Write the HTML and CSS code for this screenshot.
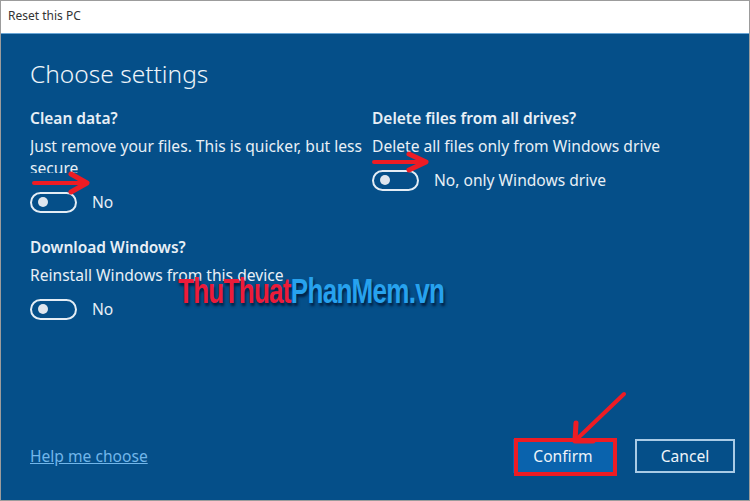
FILE: index.html
```html
<!DOCTYPE html>
<html>
<head>
	<title>Reset this PC</title>
	<meta charset="utf-8">
	<link rel="stylesheet" href="styles.css">
</head>
<body>
<div class="window">
	<div class="titlebar">Reset this PC</div>
	<div class="panel">
		<h1>Choose settings</h1>
		<div class="options">
			<div class="option">
				<div class="label">Clean data?</div>
				<div class="desc clip">Just remove your files. This is quicker, but less secure</div>
				<div class="switch-row">
					<span class="switch"><span class="knob"></span></span>
					<span>No</span>
				</div>
			</div>
			<div class="option">
				<div class="label">Delete files from all drives?</div>
				<div class="desc">Delete all files only from Windows drive</div>
				<div class="switch-row">
					<span class="switch"><span class="knob"></span></span>
					<span>No, only Windows drive</span>
				</div>
			</div>
			<div class="option">
				<div class="label">Download Windows?</div>
				<div class="desc">Reinstall Windows from this device</div>
				<div class="switch-row">
					<span class="switch"><span class="knob"></span></span>
					<span>No</span>
				</div>
			</div>
		</div>
		<div class="footer">
			<a class="help" href="#">Help me choose</a>
			<div class="buttons">
				<button class="btn primary">Confirm</button>
				<button class="btn">Cancel</button>
			</div>
		</div>
	</div>

	<!-- marks drawn over the screenshot -->
	<svg class="arrow arrow-1" width="64" height="30" viewBox="0 0 64 30">
		<path d="M3 15 H52" />
		<path class="head" d="M40 6 L56 15 L40 24" />
	</svg>
	<svg class="arrow arrow-2" width="64" height="30" viewBox="0 0 64 30">
		<path d="M3 15 H52" />
		<path class="head" d="M38 7 L55 15 L38 23" />
	</svg>
	<svg class="arrow arrow-3" width="60" height="56" viewBox="0 0 60 56">
		<path d="M54 3 L8 47" />
		<path class="head" d="M6 32 L5 50 L23 50" />
	</svg>
	<div class="redbox"></div>
	<div class="watermark"><span class="wm-red">ThuThuat</span><span class="wm-blue">PhanMem.vn</span></div>
</div>
</body>
</html>
```

FILE: styles.css
```css
*{
	padding: 0;
	margin: 0;
	box-sizing: border-box;
}
body{
	font-family: "Noto Sans", "Open Sans", sans-serif;
	background: #fff;
}
.window{
	width: 750px;
	height: 501px;
	border: 1px solid #9c9c9c;
	display: flex;
	flex-direction: column;
	position: relative;
	overflow: hidden;
}
.titlebar{
	height: 32px;
	background: #fff;
	color: #333;
	font-size: 12px;
	line-height: 30px;
	padding-left: 7px;
}
.panel{
	flex: 1;
	background: #054f89;
	border-top: 1px solid #6aa6d6;
	color: #e8eff6;
	padding: 24px 14px 27px 29px;
	display: flex;
	flex-direction: column;
}
h1{
	font-size: 24.5px;
	font-weight: 300;
	line-height: 32px;
	color: #eef4f9;
}
.options{
	display: grid;
	grid-template-columns: 342px 1fr;
	row-gap: 24px;
	margin-top: 18px;
}
.label{
	font-size: 15.5px;
	font-weight: 600;
	line-height: 20px;
}
.desc{
	font-size: 15.6px;
	line-height: 22px;
	margin-top: 7px;
}
.desc.clip{
	height: 38px;
	overflow: hidden;
	margin-bottom: 18px;
}
.switch-row{
	display: flex;
	align-items: center;
	gap: 15px;
	font-size: 15.6px;
	margin-top: 12px;
}
.switch{
	width: 47px;
	height: 21px;
	border: 2px solid #e4edf5;
	border-radius: 11px;
	display: flex;
	align-items: center;
	padding-left: 6px;
}
.knob{
	width: 10px;
	height: 10px;
	border-radius: 50%;
	background: #dfe6ee;
}
.footer{
	margin-top: auto;
	display: flex;
	align-items: center;
	justify-content: space-between;
}
.help{
	color: #72b6ea;
	font-size: 15.6px;
	text-decoration: underline;
}
.buttons{
	display: flex;
	gap: 22px;
}
.btn{
	width: 100px;
	height: 34px;
	font-family: inherit;
	font-size: 15.6px;
	color: #eef4f9;
	background: #054f89;
	border: 2px solid #a9cbe6;
}
.btn.primary{
	background: #0a63ad;
	border-color: #0a63ad;
}
.arrow{
	position: absolute;
	fill: none;
	stroke: #ee1c24;
	stroke-width: 4;
	stroke-linecap: round;
	stroke-linejoin: round;
}
.arrow .head{
	stroke-width: 5;
}
.arrow-1{
	left: 30px;
	top: 167px;
}
.arrow-2{
	left: 370px;
	top: 146px;
}
.arrow-3{
	left: 569px;
	top: 390px;
}
.redbox{
	position: absolute;
	left: 513px;
	top: 437px;
	width: 103px;
	height: 38px;
	border: 4px solid #ee1c24;
}
.watermark{
	position: absolute;
	left: 177px;
	top: 270px;
	font-family: "Liberation Sans", sans-serif;
	font-weight: bold;
	font-size: 35px;
	letter-spacing: -1px;
	transform: scaleX(0.745);
	transform-origin: left top;
	text-shadow: 2px 3px 3px rgba(0, 20, 50, 0.8);
}
.wm-red{
	color: #ec1c3a;
}
.wm-blue{
	color: #27a2ee;
}
```
